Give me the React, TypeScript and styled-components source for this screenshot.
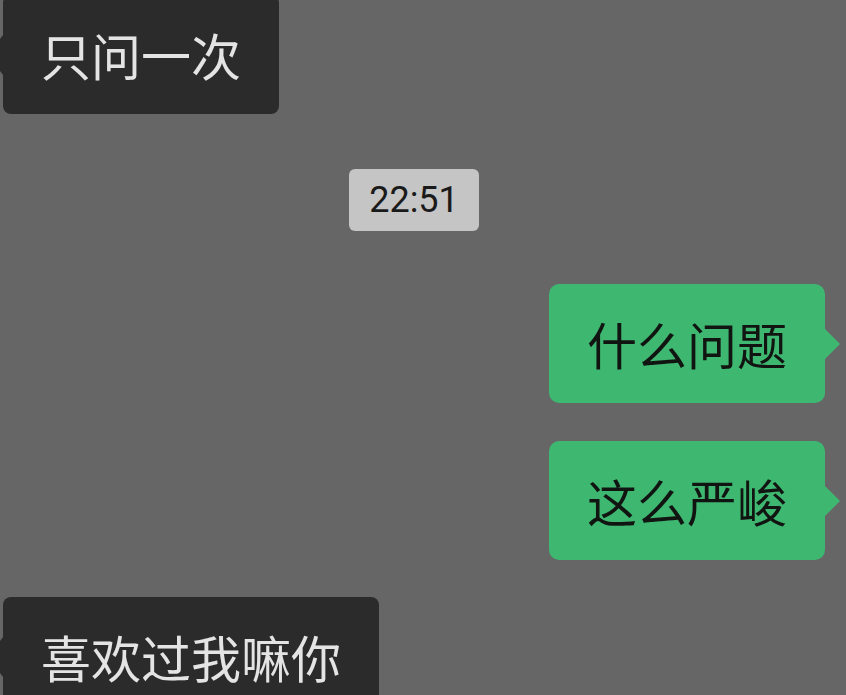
import React from 'react';
import styled, { createGlobalStyle } from 'styled-components';

type Message =
  | { kind: 'in'; text: string }
  | { kind: 'out'; text: string }
  | { kind: 'time'; text: string };

const messages: Message[] = [
  { kind: 'in', text: '只问一次' },
  { kind: 'time', text: '22:51' },
  { kind: 'out', text: '什么问题' },
  { kind: 'out', text: '这么严峻' },
  { kind: 'in', text: '喜欢过我嘛你' },
];

const App: React.FC = () => {
  return (
    <>
      <GlobalStyle />
      <Screen>
        <Thread>
          {messages.map((m, i) => {
            if (m.kind === 'time') {
              return (
                <TimeRow key={i}>
                  <TimeStamp>{m.text}</TimeStamp>
                </TimeRow>
              );
            }
            return (
              <BubbleRow key={i} $out={m.kind === 'out'}>
                <Bubble $out={m.kind === 'out'}>{m.text}</Bubble>
              </BubbleRow>
            );
          })}
        </Thread>
      </Screen>
    </>
  );
};

const GlobalStyle = createGlobalStyle`
  html, body {
    margin: 0;
    padding: 0;
    background: #666666;
  }
`;

const Screen = styled.div`
  width: 846px;
  height: 695px;
  overflow: hidden;
  background: #666666;
`;

const Thread = styled.div`
  display: flex;
  flex-direction: column;
  margin-top: -5px;
  padding: 0 21px 0 3px;

  & > *:nth-child(1) { margin-bottom: 55px; }
  & > *:nth-child(2) { margin-bottom: 53px; }
  & > *:nth-child(3) { margin-bottom: 38px; }
  & > *:nth-child(4) { margin-bottom: 37px; }
`;

const BubbleRow = styled.div<{ $out: boolean }>`
  display: flex;
  justify-content: ${(p) => (p.$out ? 'flex-end' : 'flex-start')};
`;

const Bubble = styled.div<{ $out: boolean }>`
  position: relative;
  padding: 34px 38px 35px 38px;
  border-radius: ${(p) => (p.$out ? '10px' : '8px')};
  background: ${(p) => (p.$out ? '#3eb771' : '#2b2b2b')};
  color: ${(p) => (p.$out ? '#111511' : '#e4e4e4')};
  font-family: 'Noto Sans CJK SC', 'Noto Sans', sans-serif;
  font-size: 50px;
  line-height: 50px;
  white-space: nowrap;

  &::before {
    content: '';
    position: absolute;
    top: 50%;
    transform: translateY(-50%);
    width: 0;
    height: 0;
    border-top: ${(p) => (p.$out ? '15px' : '20px')} solid transparent;
    border-bottom: ${(p) => (p.$out ? '15px' : '20px')} solid transparent;
    ${(p) =>
      p.$out
        ? `right: -15px; border-left: 15px solid #3eb771;`
        : `left: -15px; border-right: 15px solid #2b2b2b;`}
  }
`;

const TimeRow = styled.div`
  display: flex;
  justify-content: center;
`;

const TimeStamp = styled.div`
  padding: 0 20px;
  height: 62px;
  line-height: 62px;
  border-radius: 6px;
  background: #c5c5c5;
  color: #1a1a1a;
  font-family: Roboto, 'Liberation Sans', sans-serif;
  font-size: 36px;
`;

export default App;
